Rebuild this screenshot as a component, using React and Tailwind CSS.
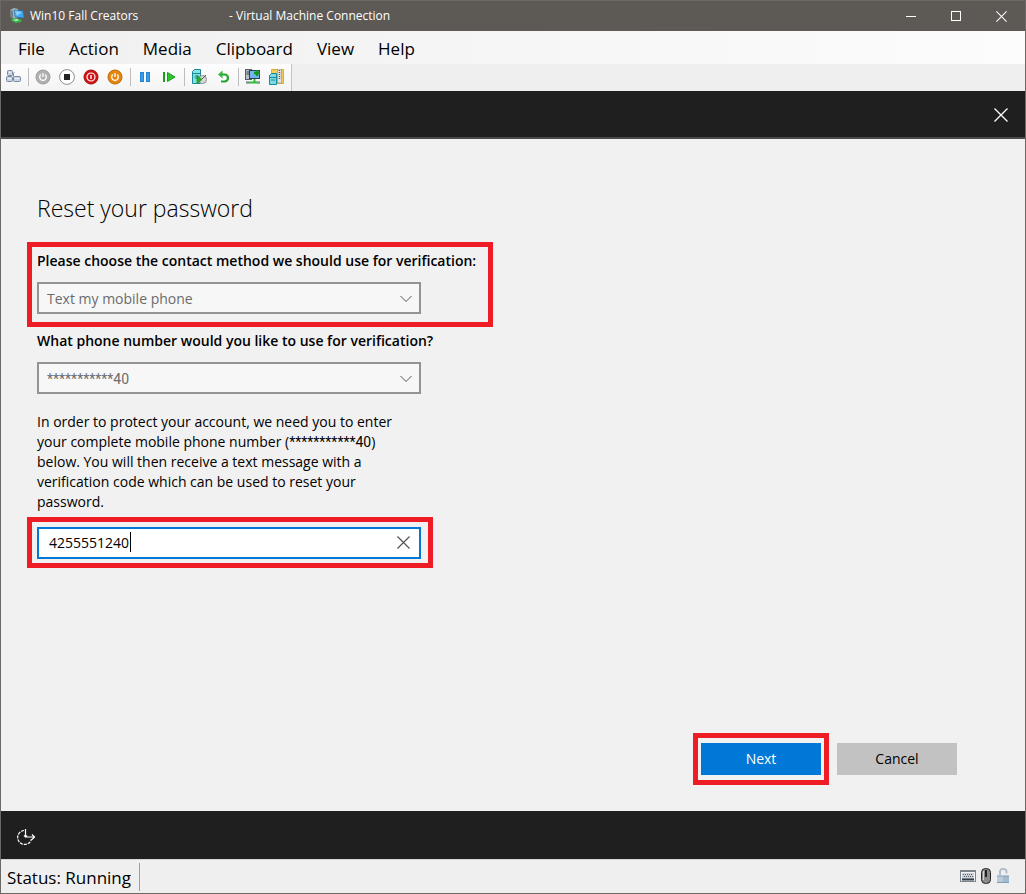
const MENU = ["File", "Action", "Media", "Clipboard", "View", "Help"];

const VmLogo = () => (
  <svg width="16" height="16" viewBox="0 0 16 16">
    <path d="M1 2l4-2 4 1v8l-4 2-4-3z" fill="#a9b3b8" />
    <path d="M1 2l3 1v8l-3-2z" fill="#737f85" />
    <path d="M5 2l9 1 1 7-9-1z" fill="#3fa9f5" stroke="#2a6ea8" strokeWidth=".6" />
    <path d="M6 3l7 1-5 4z" fill="#8bd0fb" />
    <path d="M2 11l5-1 6 2-1 2-5 1-4-2z" fill="#35b548" />
    <path d="M4 12l4-1 2 1-3 1z" fill="#d3f2d7" />
  </svg>
);

const CtrlAltDelIcon = () => (
  <svg width="16" height="16" viewBox="0 0 16 16" fill="#c9d3e6" stroke="#7a88a4">
    <rect x="2.5" y="1.5" width="5" height="5" rx="1" />
    <rect x="1.500" y="7.500" width="6" height="5" rx="1" />
    <path d="M8.500 7.500v-3q0-1 1-1" fill="none" />
    <rect x="8.500" y="7.500" width="7" height="5" rx="1" />
    <path d="M4 3.500h2M3 9.500h3M10 9.500h4" stroke="#eef2f9" />
  </svg>
);

const PowerIcon = ({ fill, rim }) => (
  <svg width="16" height="16" viewBox="0 0 16 16" fill="none">
    <circle cx="8" cy="8" r="7" fill={fill} stroke={rim} />
    <path d="M5.8 5.6a3.3 3.3 0 1 0 4.4 0M8 4v4" stroke="#fff" strokeWidth="1.3" />
  </svg>
);

const StopIcon = () => (
  <svg width="16" height="16" viewBox="0 0 16 16">
    <circle cx="8" cy="8" r="7.4" fill="#fff" stroke="#8d8d8d" />
    <rect x="5" y="5" width="6" height="6" fill="#222" />
  </svg>
);

const ShutDownIcon = () => (
  <svg width="16" height="16" viewBox="0 0 16 16" fill="none">
    <circle cx="8" cy="8" r="7" fill="#d31313" stroke="#a30c0c" />
    <circle cx="8" cy="8" r="4" stroke="#fff" strokeWidth="1.2" />
    <path d="M8 6v4" stroke="#fff" strokeWidth="1.4" />
  </svg>
);

const PauseIcon = () => (
  <svg width="16" height="16" viewBox="0 0 16 16" fill="#3a9be8" stroke="#2484d4">
    <rect x="3.5" y="3.5" width="3" height="9" />
    <rect x="9.5" y="3.5" width="3" height="9" />
  </svg>
);

const ResumeIcon = () => (
  <svg width="16" height="16" viewBox="0 0 16 16" fill="#2fc32f" stroke="#16a016">
    <rect x="2.5" y="3.5" width="1" height="9" />
    <path d="M6.5 3.5v9L14 8z" />
  </svg>
);

const CheckpointIcon = () => (
  <svg width="16" height="16" viewBox="0 0 16 16">
    <path d="M1.5 2.5l2-2h6v14h-8z" fill="#8fe0e6" stroke="#168a96" />
    <path d="M2 4.500h7M3.500 7h4M3.500 9h3" stroke="#168a96" fill="none" />
    <circle cx="11.500" cy="10.500" r="4" fill="#d9d9d9" stroke="#8d8d8d" />
    <path d="M11 10l4-4" stroke="#555" />
    <path d="M6 6.500v8l5-4z" fill="#22b422" stroke="#0f8a1a" strokeWidth=".7" />
  </svg>
);

const RevertIcon = () => (
  <svg width="16" height="16" viewBox="0 0 16 16" fill="none">
    <path d="M6 5.500h3.500a3.400 3.400 0 0 1 0 7H6" stroke="#23a52c" strokeWidth="2.200" />
    <path d="M3 5.500L7.500 1.500v8z" fill="#33b83c" />
  </svg>
);

const EnhancedIcon = () => (
  <svg width="16" height="16" viewBox="0 0 16 16">
    <rect x=".5" y=".5" width="6" height="10" fill="#b9bfc4" stroke="#596168" />
    <path d="M1.500 3h4M1.500 5h4" stroke="#444" />
    <rect x="4.500" y="1.500" width="10" height="8" fill="#6fb6f0" stroke="#2c3f55" />
    <path d="M8.500 10h2v3h-2z" fill="#33b83c" />
    <path d="M1 13.500h14" stroke="#33b83c" strokeWidth="2" />
    <path d="M1 13.500h3M12 13.500h3" stroke="#8b9399" strokeWidth="2" />
    <path d="M12 1v6M9 4h6" stroke="#17951f" strokeWidth="2.400" />
  </svg>
);

const ShareIcon = () => (
  <svg width="16" height="16" viewBox="0 0 16 16">
    <path d="M2.500.5h12v14h-12z" fill="#f2cd5c" stroke="#d5ab3a" />
    <path d="M8.500 0h4v14h-4z" fill="#e4e4e4" stroke="#8f8f8f" strokeWidth=".6" />
    <path d="M10.500 1v9" stroke="#555" strokeWidth="1.500" strokeDasharray="1 1" />
    <path d="M.5 6.500l2-2h5v11h-7z" fill="#7edbe2" stroke="#168a96" />
    <path d="M1 8.500h6M2 11h4" stroke="#168a96" />
  </svg>
);

const TOOLS = [
  [{ label: "Ctrl+Alt+Delete", icon: <CtrlAltDelIcon /> }],
  [
    { label: "Start", icon: <PowerIcon fill="#b0b0b0" rim="#9b9b9b" /> },
    { label: "Turn Off", icon: <StopIcon /> },
    { label: "Shut Down", icon: <ShutDownIcon /> },
    { label: "Save", icon: <PowerIcon fill="#e8860c" rim="#b8660a" /> },
  ],
  [
    { label: "Pause", icon: <PauseIcon /> },
    { label: "Reset", icon: <ResumeIcon /> },
  ],
  [
    { label: "Checkpoint", icon: <CheckpointIcon /> },
    { label: "Revert", icon: <RevertIcon /> },
  ],
  [
    { label: "Enhanced session", icon: <EnhancedIcon /> },
    { label: "Share", icon: <ShareIcon /> },
  ],
];

const Cross = ({ size, className }) => (
  <svg
    width={size}
    height={size}
    viewBox="0 0 14 14"
    fill="none"
    stroke="currentColor"
    className={className}
  >
    <path d="M.5.5l13 13M13.500.5l-13 13" strokeWidth="1.300" />
  </svg>
);

const TitleBar = () => (
  <header className="flex h-[30px] items-center bg-[#5d5955] pr-px pl-2 text-xs text-white">
    <VmLogo />
    <h1 className="flex flex-1 pl-[5px] whitespace-nowrap">
      <span className="w-[199px]">Win10 Fall Creators</span>
      <span>- Virtual Machine Connection</span>
    </h1>
    <button aria-label="Minimize" className="flex h-full w-[45px] items-center justify-center">
      <svg width="10" height="10" stroke="currentColor">
        <path d="M0 5.500h10" />
      </svg>
    </button>
    <button aria-label="Maximize" className="flex h-full w-[46px] items-center justify-center">
      <svg width="10" height="10" fill="none" stroke="currentColor">
        <rect x=".5" y=".5" width="9" height="9" />
      </svg>
    </button>
    <button aria-label="Close" className="flex h-full w-[45px] items-center justify-center">
      <Cross size={11} />
    </button>
  </header>
);

const ToolBar = () => (
  <div className="flex h-[27px] bg-[#efefef]">
    <div className="flex items-center border-r border-[#c4c4c4] bg-linear-to-b from-[#fdfdfd] to-[#f4f4f4] pr-1.5 pb-0.5 pl-1">
      {TOOLS.map((group, i) => (
        <div
          key={i}
          className={
            i > 0
              ? "ml-[7px] flex h-[18px] items-center gap-2 border-l border-[#bdbdbd] pl-1.5"
              : "flex h-[18px] items-center"
          }
        >
          {group.map((tool) => (
            <button key={tool.label} aria-label={tool.label}>
              {tool.icon}
            </button>
          ))}
        </div>
      ))}
    </div>
  </div>
);

const SelectField = ({ id, label, value, font = "" }) => (
  <div>
    <label htmlFor={id} className="block font-semibold whitespace-nowrap">
      {label}
    </label>
    <div className="relative mt-[11px] w-96 max-w-full">
      <select
        id={id}
        className={
          "h-8 w-full appearance-none border-2 border-[#939393] bg-[#f7f7f7] px-2 pt-0.5 text-[#6b6b6b] " +
          font
        }
      >
        <option>{value}</option>
      </select>
      <svg
        width="12"
        height="8"
        fill="none"
        stroke="#555"
        className="pointer-events-none absolute top-[13px] right-[9px]"
      >
        <path d="M.5 1l5.500 5.500L11.500 1" />
      </svg>
    </div>
  </div>
);

const StatusBar = () => (
  <footer className="flex h-[34px] items-center border-t border-[#d5d5d5] bg-[#efefef] text-[17px]">
    <p className="flex h-7 items-center border-r border-[#a0a0a0] pt-0.5 pr-2 pl-1.5">
      Status: Running
    </p>
    <div className="ml-auto flex items-center gap-0.5 pr-[13px] pb-0.5">
      <svg width="16" height="16" viewBox="0 0 16 16">
        <rect x=".5" y="2.500" width="15" height="11" fill="#f4f4f4" stroke="#7c858c" />
        <path d="M0 3h16" stroke="#7c858c" strokeWidth="2" />
        <rect x="2" y="5" width="12" height="6" fill="#c9d0d6" />
        <path d="M2 11.500h12" stroke="#2e3b45" strokeWidth="2" />
        <path d="M3 6.500h10M4 8.500h9" stroke="#596570" strokeDasharray="1 1" />
      </svg>
      <svg width="16" height="16" viewBox="0 0 16 16">
        <rect x="3.500" y=".5" width="9" height="15" rx="4" fill="#8b8b8b" stroke="#222" />
        <path d="M5.500 3v9" stroke="#d4d4d4" />
        <path d="M8 2v7" stroke="#222" strokeWidth="2" />
      </svg>
      <svg width="16" height="16" viewBox="0 0 16 16" fill="none">
        <path d="M4 7V4.500a3.200 3.200 0 0 1 6.500-1v2" stroke="#b3bcc4" strokeWidth="2" />
        <path d="M1 8h12v7H1z" fill="#bccbd9" />
        <path d="M7 8h6v7H7z" fill="#a3b9cd" />
        <path d="M1 8h12M1 14.500h12" stroke="#7d9dbb" />
      </svg>
    </div>
  </footer>
);

const App = () => {
  return (
    <div className="flex min-h-screen flex-col border border-[#6b6866] bg-[#f1f1f1] font-['Open_Sans','Noto_Sans',sans-serif] text-sm leading-5 text-black">
      <TitleBar />
      <nav className="flex h-[33px] items-center gap-6 bg-linear-to-r from-[#f0f0f0] to-[#fcfcfc] pt-0.5 pl-[17px] text-[17px]">
        {MENU.map((item) => (
          <button key={item}>{item}</button>
        ))}
      </nav>
      <ToolBar />
      <div className="flex h-12 items-center justify-end border-b-2 border-[#4b4b4b] bg-[#1f1f1f] pt-0.5 pr-[17px] text-white">
        <button aria-label="Close dialog">
          <Cross size={14} />
        </button>
      </div>

      <main className="flex flex-1 flex-col pt-[53px] pb-[26px] pl-[26px]">
        <h2 className="pl-2.5 text-[23px] leading-8 font-light">Reset your password</h2>
        <div className="mt-[18px] w-[466px] max-w-full border-5 border-[#ee1c24] px-[5px] pt-1 pb-2">
          <SelectField
            id="method"
            label="Please choose the contact method we should use for verification:"
            value="Text my mobile phone"
          />
        </div>
        <div className="mt-1 pl-2.5">
          <SelectField
            id="phone"
            label="What phone number would you like to use for verification?"
            value="***********40"
            font="font-[Roboto,sans-serif]"
          />
          <p id="phone-help" className="mt-[18px] max-w-[370px]">
            In order to protect your account, we need you to enter your complete
            mobile phone number (
            <span className="font-[Roboto,sans-serif]">***********40</span>)
            below. You will then receive a text message with a verification code
            which can be used to reset your password.
          </p>
        </div>
        <div className="mt-[5px] w-[406px] max-w-full border-5 border-[#ee1c24] px-[5px] pt-[5px] pb-1">
          <div className="relative w-96 max-w-full">
            <input
              type="text"
              aria-label="Complete mobile phone number"
              aria-describedby="phone-help"
              defaultValue="4255551240"
              className="block h-8 w-full border-2 border-[#0078d7] bg-white px-2.5 pb-0.5 outline-none"
            />
            <span className="absolute top-[5px] left-[93px] h-5 w-px bg-black" />
            <button aria-label="Clear" className="absolute top-[9px] right-[11px] text-[#555]">
              <Cross size={13} className="block" />
            </button>
          </div>
        </div>

        <div className="mt-auto flex items-center justify-end gap-2 pr-[68px]">
          <div className="border-5 border-[#ee1c24] px-[3px] py-[5px]">
            <button className="block h-8 w-[120px] bg-[#0078d7] text-white">Next</button>
          </div>
          <button className="h-8 w-[120px] bg-[#c2c2c2]">Cancel</button>
        </div>
      </main>

      <div className="flex h-12 items-center bg-[#1f1f1f] pt-1 pl-[15px] text-white">
        <button aria-label="Ease of access">
          <svg width="20" height="18" viewBox="0 0 20 18" fill="none" stroke="currentColor">
            <path d="M8 2.500a7 7 0 1 0 7.500 8.500" strokeWidth="1.200" strokeDasharray="3 1" />
            <path d="M9.500 1v8h9M8 7.500L9.500 9 11 7.500M16 6.500L18.500 9 16 11.500" strokeWidth="1.200" />
          </svg>
        </button>
      </div>
      <StatusBar />
    </div>
  );
};

export default App;
